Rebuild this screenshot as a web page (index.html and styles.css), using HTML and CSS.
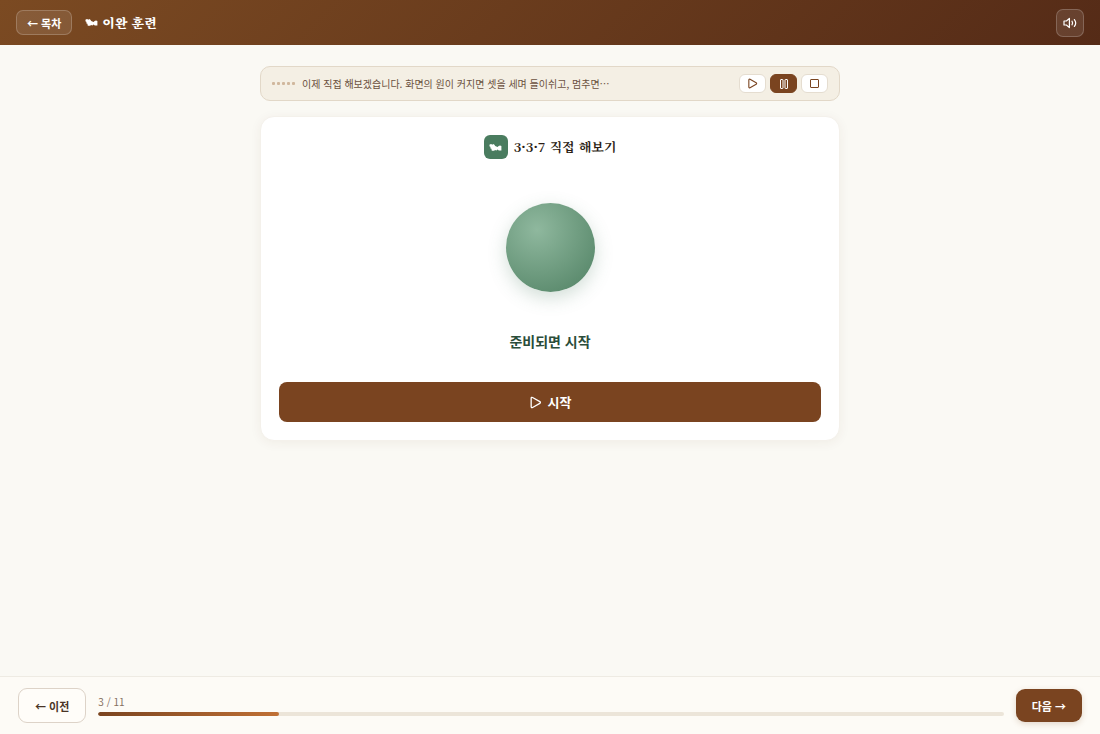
FILE: index.html
```html
<!DOCTYPE html>
<html lang="ko">
<head>
    <meta charset="UTF-8">
    <meta name="viewport" content="width=device-width, initial-scale=1.0">
    <title>이완 훈련</title>
    <link rel="stylesheet" href="styles.css">
</head>
<body>

<svg class="sprite" aria-hidden="true">
    <symbol id="wind" viewBox="0 0 13 9">
        <path d="M.6 1.6 L2.2 1 L3.2 1.8 L4.2 1 L5.4 1.8 L6.2 3 L7.4 3.6 L8.6 4 L9.6 3 L11 2.6 L12.4 3 L12.4 7.4 L9.8 7.4 L8.6 6.6 L7.4 7.4 L6 7 L5.2 7.8 L2.8 7.8 L2.4 5.8 L1.2 5.2 L1.6 4 L.4 3.2 Z" fill="currentColor"/>
    </symbol>
    <symbol id="play" viewBox="0 0 12 12">
        <path d="M2 2.2 C2 1.3 2.6 1 3.3 1.4 L10 5.2 C10.7 5.6 10.7 6.4 10 6.8 L3.3 10.6 C2.6 11 2 10.7 2 9.8 Z" fill="none" stroke="currentColor" stroke-width="1.2" stroke-linejoin="round"/>
    </symbol>
</svg>

<header class="topbar">
    <button type="button" class="back-btn">← 목차</button>
    <h1 class="page-title"><svg class="title-icon"><use href="#wind"/></svg>이완 훈련</h1>
    <button type="button" class="sound-btn" aria-label="소리">
        <svg width="14" height="14" viewBox="0 0 14 14" fill="none" stroke="currentColor" stroke-width="1.2" stroke-linecap="round" stroke-linejoin="round">
            <path d="M1 5 H3.4 L6.4 2.4 V11.6 L3.4 9 H1 Z"/>
            <path d="M9 5.2 Q10.2 7 9 8.8"/>
            <path d="M11.4 3.6 Q14 7 11.4 10.4"/>
        </svg>
    </button>
</header>

<main class="content">
    <section class="narration">
        <div class="wave"><i></i><i></i><i></i><i></i><i></i></div>
        <p class="narration-text">이제 직접 해보겠습니다. 화면의 원이 커지면 셋을 세며 들이쉬고, 멈추면…</p>
        <div class="controls">
            <button type="button" class="control" aria-label="재생"><svg width="11" height="11"><use href="#play"/></svg></button>
            <button type="button" class="control active" aria-label="일시정지">
                <svg width="12" height="12" viewBox="0 0 12 12" fill="none" stroke="currentColor" stroke-width="1">
                    <rect x="2.5" y="1.5" width="2.5" height="9" rx=".5"/>
                    <rect x="7" y="1.5" width="2.5" height="9" rx=".5"/>
                </svg>
            </button>
            <button type="button" class="control" aria-label="정지">
                <svg width="12" height="12" viewBox="0 0 12 12" fill="none" stroke="currentColor" stroke-width="1">
                    <rect x="1.5" y="1.5" width="8" height="8" rx=".5"/>
                </svg>
            </button>
        </div>
    </section>

    <section class="card">
        <h2 class="card-title"><span class="badge"><svg class="title-icon"><use href="#wind"/></svg></span>3·3·7 직접 해보기</h2>
        <div class="breath-area"><div class="breath-circle"></div></div>
        <p class="status">준비되면 시작</p>
        <button type="button" class="start-btn"><svg width="13" height="13"><use href="#play"/></svg>시작</button>
    </section>
</main>

<footer class="bottombar">
    <button type="button" class="prev-btn">← 이전</button>
    <div class="progress">
        <span class="progress-label">3 / 11</span>
        <div class="progress-track"><div class="progress-fill" style="width: 20%"></div></div>
    </div>
    <button type="button" class="next-btn">다음 →</button>
</footer>

</body>
</html>
```
FILE: styles.css
```css
* {
    box-sizing: border-box;
}
body {
    margin: 0;
    min-height: 100vh;
    display: flex;
    flex-direction: column;
    background: #faf9f4;
    color: #2b1d14;
    font-family: "Noto Sans CJK KR", sans-serif;
}
h1, h2, p {
    margin: 0;
}
button {
    font-family: inherit;
    cursor: pointer;
}
svg {
    display: block;
}
.sprite {
    position: absolute;
    width: 0;
    height: 0;
}
.topbar {
    display: flex;
    align-items: center;
    gap: 13px;
    height: 45px;
    padding: 0 16px;
    background: linear-gradient(135deg, #7b4a22, #552b17);
    color: #fff;
}
.back-btn {
    height: 25px;
    padding: 0 10px;
    border: 1px solid rgba(255, 255, 255, 0.2);
    border-radius: 7px;
    background: rgba(255, 255, 255, 0.1);
    color: #fff;
    font-size: 11px;
    font-weight: 600;
    line-height: 16px;
}
.page-title {
    display: flex;
    flex: 1;
    align-items: center;
    gap: 4px;
    font-family: "Noto Serif KR", "Noto Serif CJK KR", serif;
    font-size: 13px;
    font-weight: 900;
    line-height: 20px;
}
.title-icon {
    width: 13px;
    height: 9px;
}
.sound-btn {
    display: flex;
    align-items: center;
    justify-content: center;
    width: 28px;
    height: 28px;
    padding: 0;
    border: 1px solid rgba(255, 255, 255, 0.2);
    border-radius: 7px;
    background: rgba(255, 255, 255, 0.1);
    color: #fff;
}
.content {
    flex: 1;
    width: 100%;
    max-width: 612px;
    margin: 0 auto;
    padding: 21px 16px;
}
.narration {
    display: flex;
    align-items: center;
    gap: 7px;
    height: 35px;
    padding: 0 11px;
    border: 1px solid #e2d8c8;
    border-radius: 10px;
    background: #f4efe4;
}
.wave {
    display: flex;
    gap: 2px;
}
.wave i {
    width: 3px;
    height: 3px;
    border-radius: 1px;
    background: #d0b79d;
}
.narration-text {
    flex: 1;
    color: #6b5140;
    font-size: 10px;
    line-height: 16px;
}
.controls {
    display: flex;
    gap: 4px;
}
.control {
    display: flex;
    align-items: center;
    justify-content: center;
    width: 27px;
    height: 19px;
    padding: 0;
    border: 1px solid #e5ddd0;
    border-radius: 6px;
    background: #fff;
    color: #7a4420;
}
.control.active {
    border-color: #7a4420;
    background: #7a4420;
    color: #fff;
}
.card {
    margin-top: 15px;
    padding: 18px;
    border: 1px solid #f4f1eb;
    border-radius: 14px;
    background: #fff;
    box-shadow: 0 2px 12px rgba(80, 50, 20, 0.06);
}
.card-title {
    display: flex;
    align-items: center;
    justify-content: center;
    gap: 6px;
    font-family: "Noto Serif KR", "Noto Serif CJK KR", serif;
    font-size: 13px;
    font-weight: 700;
    line-height: 24px;
}
.badge {
    display: flex;
    align-items: center;
    justify-content: center;
    width: 24px;
    height: 24px;
    border-radius: 6px;
    background: #4a7c5f;
    color: #fff;
}
.breath-area {
    display: flex;
    align-items: center;
    justify-content: center;
    height: 177px;
}
.breath-circle {
    width: 89px;
    height: 89px;
    border-radius: 50%;
    background: radial-gradient(circle at 35% 30%, #8fb89e, #4f8062);
    box-shadow: 0 6px 18px rgba(74, 124, 95, 0.25);
}
.status {
    margin-bottom: 36px;
    color: #2a4d3a;
    font-size: 14px;
    font-weight: 600;
    line-height: 10px;
    text-align: center;
}
.start-btn {
    display: flex;
    align-items: center;
    justify-content: center;
    gap: 6px;
    width: 100%;
    height: 40px;
    padding: 0;
    border: 0;
    border-radius: 8px;
    background: #7a4420;
    color: #fff;
    font-size: 13px;
    font-weight: 700;
    line-height: 16px;
}
.bottombar {
    display: flex;
    align-items: center;
    gap: 12px;
    height: 58px;
    padding: 0 18px;
    border-top: 1px solid #eeebe3;
    background: #fdfbf6;
}
.prev-btn {
    height: 35px;
    padding: 0 16px;
    border: 1px solid #ddd3c8;
    border-radius: 9px;
    background: #fffdf9;
    color: #4a3426;
    font-size: 11px;
    font-weight: 600;
}
.next-btn {
    height: 33px;
    padding: 0 16px;
    border: 0;
    border-radius: 9px;
    background: #7a4420;
    color: #fff;
    font-size: 11px;
    font-weight: 700;
    box-shadow: 0 2px 6px rgba(122, 68, 32, 0.2);
}
.progress {
    flex: 1;
}
.progress-label {
    display: block;
    margin-bottom: 4px;
    color: #85705f;
    font-size: 10px;
    line-height: 12px;
}
.progress-track {
    height: 4px;
    border-radius: 2px;
    background: #ece5d9;
    overflow: hidden;
}
.progress-fill {
    height: 100%;
    border-radius: 2px;
    background: linear-gradient(90deg, #7a4420, #c07035);
}
```
